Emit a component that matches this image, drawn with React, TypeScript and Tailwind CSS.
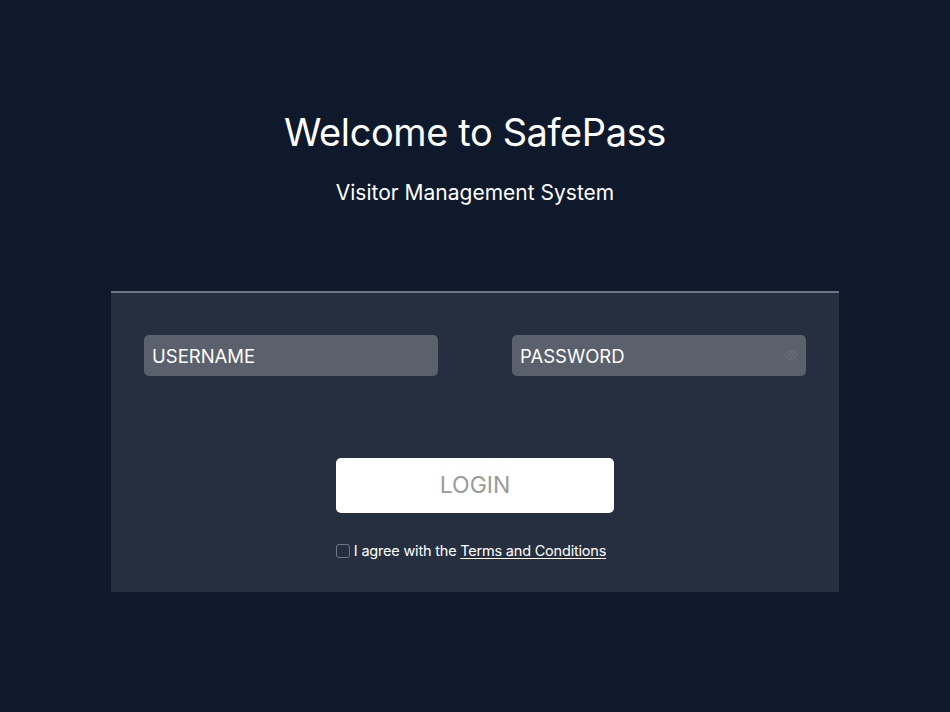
import React, { useState } from 'react';

export default function App() {
  const [agree, setAgree] = useState(false);

  return (
    <div className="w-[950px] h-[712px] bg-[#0e192c] flex flex-col items-center font-['Inter',sans-serif] text-white">
      <h1 className="mt-[109px] text-[38px] leading-[46px] font-normal tracking-[-0.4px]">
        Welcome to SafePass
      </h1>
      <p className="mt-[25px] text-[21px] leading-[26px]">Visitor Management System</p>

      <div className="mt-[85px] w-[728px] h-[301px] bg-[#252f40] border-t-2 border-[#6d7687] flex flex-col items-center">
        <div className="mt-[42px] w-full px-[33px] flex justify-between">
          <input
            type="text"
            placeholder="USERNAME"
            className="w-[294px] h-[41px] rounded-[5px] bg-[#5a606c] px-2 text-[18.5px] text-white placeholder:text-white outline-none"
          />
          <div className="relative w-[294px] h-[41px]">
            <input
              type="password"
              placeholder="PASSWORD"
              className="w-full h-full rounded-[5px] bg-[#5a606c] pl-2 pr-8 text-[18.5px] text-white placeholder:text-white outline-none"
            />
            <svg
              className="absolute right-[8px] top-[15px]"
              width="14"
              height="10"
              viewBox="0 0 14 10"
              fill="none"
              stroke="#666c78"
              strokeWidth="1.3"
            >
              <path d="M1 5c1.6-2.6 3.6-4 6-4s4.4 1.4 6 4c-1.6 2.6-3.6 4-6 4S2.6 7.6 1 5z" />
              <circle cx="7" cy="5" r="1.8" />
            </svg>
          </div>
        </div>

        <button className="mt-[82px] w-[278px] h-[55px] rounded-[5px] bg-white text-[23px] text-[#9a9a9a]">
          LOGIN
        </button>

        <label className="mt-[29px] pr-[8px] flex items-center gap-[4px] text-[14.5px] leading-[18px] tracking-[-0.2px]">
          <span
            onClick={() => setAgree(!agree)}
            className={`w-[14px] h-[14px] rounded-[3px] border border-[#6f7684] ${agree ? 'bg-white' : 'bg-[#252f40]'}`}
          />
          <span>
            I agree with the <span className="underline underline-offset-2">Terms and Conditions</span>
          </span>
        </label>
      </div>
    </div>
  );
}
